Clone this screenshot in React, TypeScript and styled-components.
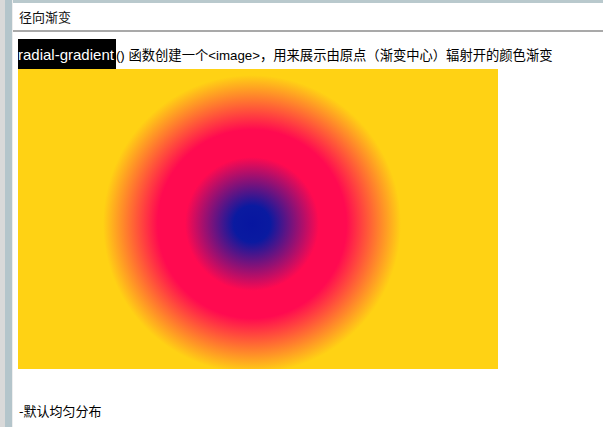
import React from "react";
import styled, { createGlobalStyle } from "styled-components";

const Global = createGlobalStyle`
  html, body { margin: 0; padding: 0; background: #fff; overflow: hidden; }
  body { font-family: "Liberation Sans", "Noto Sans CJK SC", sans-serif; }
`;

const Frame = styled.div`
  display: flex;
  width: 603px;
  height: 427px;
  overflow: hidden;
`;

const Rail = styled.div`
  display: flex;
  flex: 0 0 13px;
`;

const RailStripe = styled.div<{ $w: number; $c: string }>`
  width: ${(p) => p.$w}px;
  background: ${(p) => p.$c};
`;

const Main = styled.div`
  flex: 1;
  display: flex;
  flex-direction: column;
  background: #fff;
`;

const TopStrip = styled.div`
  height: 3px;
  background: #b9c9cd;
`;

const TitleBar = styled.div`
  height: 27px;
  border-bottom: 2px solid #a9a9a9;
  display: flex;
  align-items: center;
  padding-left: 6px;
  font-family: "Noto Sans CJK SC", sans-serif;
  font-size: 13px;
  color: #111;
`;

const Content = styled.div`
  padding: 7px 0 0 5px;
  display: flex;
  flex-direction: column;
`;

const Line = styled.div`
  height: 30px;
  display: flex;
  align-items: center;
  font-family: "Liberation Sans", "Noto Sans CJK SC", sans-serif;
  font-size: 13.3px;
  color: #000;
  white-space: pre;
`;

const Highlight = styled.span`
  display: inline-flex;
  align-items: center;
  height: 30px;
  padding-right: 2px;
  background: #000;
  color: #fff;
  font-size: 15px;
`;

const Gradient = styled.div`
  width: 480px;
  height: 300px;
  background: radial-gradient(
    circle 152px at 234px 155px,
    #0716a0 0%,
    #0a1aa0 12%,
    #ff0a50 44%,
    #ff0a50 62%,
    #ffd214 98%
  );
`;

const Note = styled.div`
  margin-top: 31px;
  height: 20px;
  display: flex;
  align-items: center;
  padding-left: 1px;
  font-family: "Noto Sans CJK SC", sans-serif;
  font-size: 13px;
  color: #000;
`;

export default function App() {
  return (
    <>
      <Global />
      <Frame>
        <Rail>
          <RailStripe $w={5} $c="#d9d9d9" />
          <RailStripe $w={7} $c="#b4c5cb" />
          <RailStripe $w={1} $c="#eeeeee" />
        </Rail>
        <Main>
          <TopStrip />
          <TitleBar>径向渐变</TitleBar>
          <Content>
            <Line>
              <Highlight>radial-gradient</Highlight>() 函数创建一个&lt;image&gt;，用来展示由原点（渐变中心）辐射开的颜色渐变
            </Line>
            <Gradient />
            <Note>-默认均匀分布</Note>
          </Content>
        </Main>
      </Frame>
    </>
  );
}
